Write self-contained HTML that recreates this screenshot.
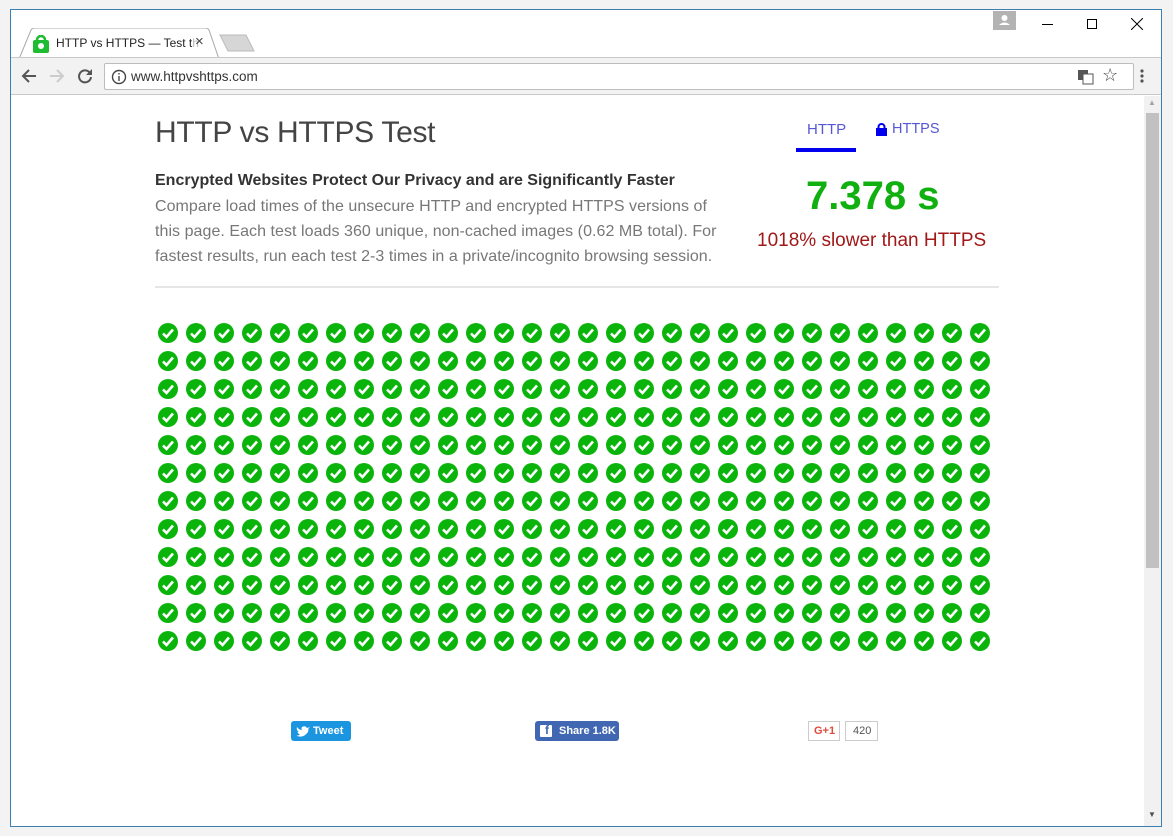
<!DOCTYPE html>
<html><head><meta charset="utf-8"><style>
*{margin:0;padding:0;box-sizing:border-box}
body{width:1173px;height:836px;background:#f3f3f3;position:relative;overflow:hidden;font-family:"Liberation Sans",sans-serif}
.win{position:absolute;left:10px;top:9px;width:1152px;height:818px;background:#fff;border:1px solid #3c7fb1}
.abs{position:absolute}
.tab{position:absolute;left:8px;top:18px;width:200px;height:31px}
.toolbar{position:absolute;left:0;top:47px;width:1150px;height:38px;background:#f2f2f2;border-top:1px solid #c8c8c8;border-bottom:1px solid #c8c8c8}
.omni{position:absolute;left:93px;top:5px;width:1030px;height:27px;background:#fff;border:1px solid #bdbdbd;border-radius:2px;font-size:13.5px;color:#333}
.t{position:absolute;white-space:nowrap}
</style></head><body>
<div class="win">
  <svg class="tab" viewBox="0 0 200 31"><path d="M0 31 L12 2 Q13 0 16 0 L186 0 Q189 0 190 2 L200 31" fill="#fff" stroke="#a8a8a8"/></svg>
  <svg class="abs" style="left:208px;top:24px" width="36" height="20"><path d="M1 1 H27 L35 17 H9 Z" fill="#d6d6d6" stroke="#bbb"/></svg>
  <svg class="abs" style="left:21px;top:25px" width="18" height="18"><rect x="1" y="5" width="16" height="13" rx="2" fill="#1ebc30"/><path d="M5 7 V5 a4 4 0 0 1 8 0 V7" fill="none" stroke="#1ebc30" stroke-width="2.5"/><circle cx="9" cy="11" r="3" fill="#fff"/></svg>
  <div class="t" style="left:45px;top:26px;font-size:12px;color:#222">HTTP vs HTTPS — Test t<span style="color:#bbb">h</span></div>
  <div class="t" style="left:184px;top:23px;font-size:15px;color:#444">×</div>
  <div class="abs" style="left:982px;top:1px;width:23px;height:19px;background:#b3b3b3"><svg width="23" height="19"><circle cx="11.5" cy="7" r="3" fill="#fff"/><path d="M6 14 Q11.5 9 17 14 Z" fill="#fff"/></svg></div>
  <div class="abs" style="left:1031px;top:14px;width:11px;height:1px;background:#000"></div>
  <div class="abs" style="left:1076px;top:9px;width:10px;height:10px;border:1px solid #000"></div>
  <svg class="abs" style="left:1120px;top:8px" width="12" height="12"><path d="M0 0 L12 12 M12 0 L0 12" stroke="#000"/></svg>
  <div class="toolbar">
    <svg class="abs" style="left:10px;top:10px" width="16" height="16"><path d="M15 8 H2 M8 2 L2 8 L8 14" fill="none" stroke="#555" stroke-width="2"/></svg>
    <svg class="abs" style="left:38px;top:10px" width="16" height="16"><path d="M1 8 H14 M8 2 L14 8 L8 14" fill="none" stroke="#ccc" stroke-width="2"/></svg>
    <svg class="abs" style="left:66px;top:10px" width="16" height="16"><path d="M13 5 A6 6 0 1 0 14 9" fill="none" stroke="#555" stroke-width="2"/><path d="M15 1 V7 H9 Z" fill="#555"/></svg>
    <div class="omni">
      <svg class="abs" style="left:6px;top:5px" width="16" height="16"><circle cx="8" cy="8" r="6.5" fill="none" stroke="#444" stroke-width="1.4"/><rect x="7.3" y="7" width="1.4" height="5" fill="#444"/><rect x="7.3" y="4" width="1.4" height="1.5" fill="#444"/></svg>
      <div class="t" style="left:26px;top:5px">www.httpvshttps.com</div>
      <svg class="abs" style="left:973px;top:5px" width="16" height="16"><rect x="0" y="1" width="10" height="10" fill="#555"/><rect x="5" y="5" width="10" height="10" fill="#fff" stroke="#555"/></svg>
      <div class="t" style="left:997px;top:1px;font-size:18px;color:#444">☆</div>
    </div>
    <svg class="abs" style="left:1129px;top:10px" width="4" height="16"><circle cx="2" cy="3" r="1.6" fill="#555"/><circle cx="2" cy="8" r="1.6" fill="#555"/><circle cx="2" cy="13" r="1.6" fill="#555"/></svg>
  </div>
  <div class="abs" style="left:1133px;top:86px;width:17px;height:730px;background:#f1f1f1"></div>
  <div class="abs" style="left:1135px;top:103px;width:13px;height:455px;background:#c1c1c1"></div>
  <div class="t" style="left:1137px;top:88px;font-size:8px;color:#a3a3a3">▲</div>
  <div class="t" style="left:1137px;top:800px;font-size:8px;color:#505050">▼</div>
</div>

<div class="t" style="left:155px;top:116px;font-size:30px;color:#444;letter-spacing:-0.3px">HTTP vs HTTPS Test</div>
<div class="t" style="left:155px;top:172px;font-size:16px;font-weight:bold;color:#333">Encrypted Websites Protect Our Privacy and are Significantly Faster</div>
<div class="t" style="left:155px;top:194px;font-size:16px;color:#777;line-height:25px;letter-spacing:0.05px">Compare load times of the unsecure HTTP and encrypted HTTPS versions of<br>this page. Each test loads 360 unique, non-cached images (0.62 MB total). For<br>fastest results, run each test 2-3 times in a private/incognito browsing session.</div>
<div class="abs" style="left:155px;top:286px;width:844px;height:2px;background:#e6e6e6"></div>

<div class="t" style="left:807px;top:121px;font-size:15px;color:#5656d6">HTTP</div>
<div class="abs" style="left:796px;top:148px;width:60px;height:4px;background:#0000ee"></div>
<svg class="abs" style="left:876px;top:123px" width="11" height="13"><rect x="0" y="5" width="11" height="8" fill="#0000ee"/><path d="M2.5 6 V4 a3 3 0 0 1 6 0 V6" fill="none" stroke="#0000ee" stroke-width="2"/></svg>
<div class="t" style="left:892px;top:121px;font-size:14.5px;color:#5656d6">HTTPS</div>
<div class="t" style="left:806px;top:174px;font-size:40px;font-weight:bold;color:#0fb00f">7.378 s</div>
<div class="t" style="left:757px;top:230px;font-size:19px;color:#a01818">1018% slower than HTTPS</div>

<svg class="abs" style="left:154px;top:319px" width="840" height="336">
<defs><pattern id="p" width="28" height="28" patternUnits="userSpaceOnUse"><circle cx="14" cy="14" r="10" fill="#0ab40a"/><path d="M9 14.5 L12.5 18 L19 10.5" fill="none" stroke="#fff" stroke-width="2.6"/></pattern></defs>
<rect width="840" height="336" fill="url(#p)"/></svg>

<div class="abs" style="left:291px;top:721px;width:60px;height:20px;background:#1b95e0;border-radius:3px;color:#fff;font-size:11px;font-weight:bold;padding:4px 0 0 22px">Tweet</div>
<svg class="abs" style="left:296px;top:725px" width="14" height="12"><path d="M14 1.5 Q12 3 11 3 Q9 0 6 2 Q5 3.5 6 5 Q3 5 1 2 Q0 5 3 7 Q2 7 1.5 6.8 Q2 9 4 9.5 Q2 11 0 10.5 Q7 14 12 7 Q12.5 5 12.5 3.5 Z" fill="#fff"/></svg>
<div class="abs" style="left:535px;top:721px;width:84px;height:20px;background:#4267b2;border-radius:3px;color:#fff;font-size:11px;font-weight:bold;padding:4px 0 0 24px">Share 1.8K</div>
<div class="abs" style="left:540px;top:725px;width:12px;height:12px;background:#fff;border-radius:1px"></div>
<div class="t" style="left:545px;top:723px;font-size:12px;font-weight:bold;color:#4267b2">f</div>
<div class="abs" style="left:808px;top:721px;width:32px;height:20px;border:1px solid #ccc;color:#dd4b39;font-size:11px;font-weight:bold;padding:3px 0 0 5px">G+1</div>
<div class="abs" style="left:845px;top:721px;width:33px;height:20px;border:1px solid #ccc;color:#555;font-size:11px;padding:3px 0 0 7px">420</div>
</body></html>
